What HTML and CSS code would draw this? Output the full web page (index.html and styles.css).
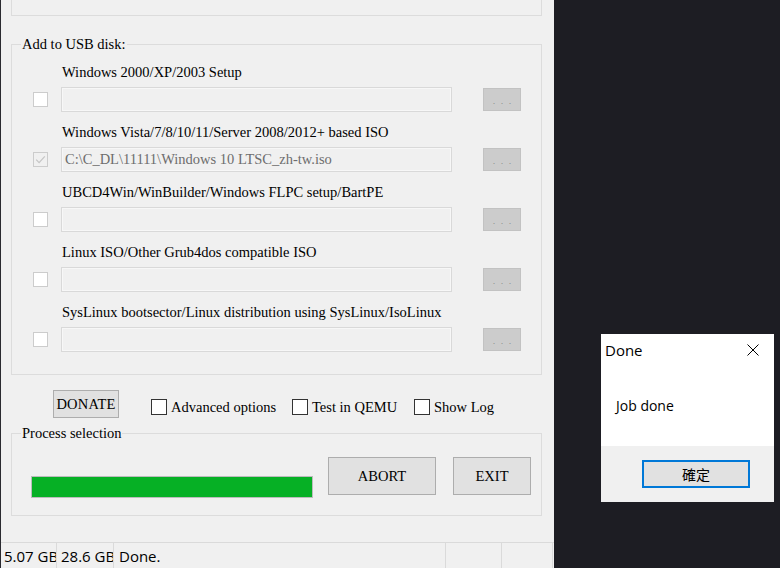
FILE: index.html
```html
<!DOCTYPE html>
<html>
<head>
<meta charset="utf-8">
<link rel="stylesheet" href="styles.css">
</head>
<body>
<div class="desk">
  <div class="win">
    <div class="grp grp-top"></div>

    <div class="grp grp-usb">
      <span class="legend">Add to USB disk:</span>
      <div class="src">
        <div class="src-label">Windows 2000/XP/2003 Setup</div>
        <span class="chk"></span>
        <div class="field"></div>
        <span class="browse">. . .</span>
      </div>
      <div class="src">
        <div class="src-label">Windows Vista/7/8/10/11/Server 2008/2012+ based ISO</div>
        <span class="chk chk-on"><svg viewBox="0 0 15 15" width="15" height="15"><path d="M3.2 7.6 L6.1 10.6 L11.8 4.4" fill="none" stroke="#c4c4c4" stroke-width="1.2"/></svg></span>
        <div class="field">C:\C_DL\11111\Windows 10 LTSC_zh-tw.iso</div>
        <span class="browse">. . .</span>
      </div>
      <div class="src">
        <div class="src-label">UBCD4Win/WinBuilder/Windows FLPC setup/BartPE</div>
        <span class="chk"></span>
        <div class="field"></div>
        <span class="browse">. . .</span>
      </div>
      <div class="src">
        <div class="src-label">Linux ISO/Other Grub4dos compatible ISO</div>
        <span class="chk"></span>
        <div class="field"></div>
        <span class="browse">. . .</span>
      </div>
      <div class="src">
        <div class="src-label">SysLinux bootsector/Linux distribution using SysLinux/IsoLinux</div>
        <span class="chk"></span>
        <div class="field"></div>
        <span class="browse">. . .</span>
      </div>
    </div>

    <div class="opts">
      <span class="btn donate">DONATE</span>
      <span class="opt opt-adv"><span class="box"></span>Advanced options</span>
      <span class="opt opt-qemu"><span class="box"></span>Test in QEMU</span>
      <span class="opt"><span class="box"></span>Show Log</span>
    </div>

    <div class="grp grp-proc">
      <span class="legend">Process selection</span>
      <div class="progress"><div class="bar" style="width:100%"></div></div>
      <span class="btn big abort">ABORT</span>
      <span class="btn big exit">EXIT</span>
    </div>

    <div class="status">
      <span class="panel p1">5.07 GB</span>
      <span class="panel p2">28.6 GB</span>
      <span class="panel p3">Done.</span>
      <span class="panel p4"></span>
      <span class="panel p5"></span>
    </div>
  </div>

  <div class="dialog">
    <div class="dlg-title">
      <span>Done</span>
      <svg class="dlg-close" viewBox="0 0 12 12" width="12" height="12"><path d="M0.5 0.5 L11.5 11.5 M11.5 0.5 L0.5 11.5" stroke="#000" stroke-width="1" fill="none"/></svg>
    </div>
    <div class="dlg-body">Job done</div>
    <div class="dlg-foot"><span class="dlg-ok">確定</span></div>
  </div>
</div>
</body>
</html>
```
FILE: styles.css
```css
* { box-sizing: border-box; }
html, body { margin: 0; padding: 0; }
body { background: #1d1d23; }

.desk {
  position: relative;
  width: 780px;
  height: 568px;
  overflow: hidden;
  background: #1d1d23;
}

.win {
  width: 554px;
  height: 568px;
  border-left: 1px solid #2a2a30;
  background: #f0f0f0;
  display: flex;
  flex-direction: column;
  font-family: "Liberation Serif", "Noto Sans CJK TC", serif;
  font-size: 14.5px;
  color: #000;
}

.grp {
  position: relative;
  margin-left: 10px;
  margin-right: 12px;
  border: 1px solid #dcdcdc;
}

.grp-top {
  height: 16px;
  border-top: none;
}

.legend {
  position: absolute;
  top: -9px;
  left: 9px;
  padding: 0 1px;
  line-height: 16px;
  background: #f0f0f0;
  white-space: nowrap;
}

.grp-usb {
  margin-top: 28px;
  padding: 19px 0 22px 21px;
  display: flex;
  flex-direction: column;
  gap: 12px;
}

.src {
  display: grid;
  grid-template-columns: 15px 391px 56px;
  grid-template-rows: 16px 25px;
  column-gap: 13px;
  row-gap: 7px;
  align-items: center;
}

.src-label {
  grid-column: 2;
  grid-row: 1;
  line-height: 16px;
  padding-left: 1px;
  white-space: nowrap;
}

.chk {
  grid-column: 1;
  grid-row: 2;
  width: 15px;
  height: 15px;
  border: 1px solid #cccccc;
  background: #ffffff;
  display: block;
  position: relative;
}
.chk-on { background: #f0f0f0; }
.chk-on svg { position: absolute; left: -1px; top: -1px; }

.field {
  grid-column: 2;
  grid-row: 2;
  height: 25px;
  border: 1px solid #d9d9d9;
  box-shadow: inset 0 0 0 1px #f7f7f7;
  background: #f0f0f0;
  color: #6d6d6d;
  padding: 0 0 0 3px;
  line-height: 23px;
  white-space: nowrap;
  overflow: hidden;
}

.browse {
  grid-column: 3;
  grid-row: 2;
  justify-self: end;
  width: 38px;
  height: 23px;
  background: #cccccc;
  border: 1px solid #c2c2c2;
  color: #8c8c8c;
  font-family: "Liberation Sans", sans-serif;
  font-size: 9px;
  line-height: 24px;
  text-align: center;
  word-spacing: 3px;
}

.opts {
  margin-top: 15px;
  height: 28px;
  display: flex;
  align-items: center;
  padding-left: 52px;
}

.btn {
  display: flex;
  align-items: center;
  justify-content: center;
  background: #e1e1e1;
  border: 1px solid #adadad;
  white-space: nowrap;
}

.donate {
  width: 66px;
  height: 28px;
  margin-right: 32px;
  letter-spacing: 0.2px;
}

.opt {
  display: flex;
  align-items: center;
  gap: 4px;
  white-space: nowrap;
  margin-top: 6px;
}
.opt-adv { width: 141px; }
.opt-qemu { width: 122px; }

.box {
  width: 16px;
  height: 16px;
  border: 1px solid #333333;
  background: #ffffff;
  flex: none;
}

.grp-proc {
  margin-top: 15px;
  height: 83px;
  padding: 23px 10px 0 19px;
  display: flex;
  align-items: center;
  align-self: flex-start;
  width: 531px;
}

.progress {
  width: 282px;
  height: 22px;
  border: 1px solid #bcbcbc;
  background: #e6e6e6;
  margin-right: 15px;
  align-self: center;
  margin-top: 2px;
}
.bar { height: 100%; background: #06b025; }

.big {
  height: 38px;
  align-self: flex-start;
  padding-top: 1px;
}
.abort { width: 108px; margin-right: 17px; }
.exit { width: 78px; }

.status {
  margin-top: auto;
  height: 26px;
  border-top: 1px solid #dadada;
  display: flex;
  font-family: "Open Sans", "Noto Sans", sans-serif;
  font-size: 15px;
  color: #000;
}
.panel {
  height: 25px;
  line-height: 26px;
  white-space: nowrap;
  overflow: hidden;
  border-right: 1px solid #dadada;
  padding-left: 3px;
}
.p1 { width: 56px; }
.p2 { width: 57px; padding-left: 4px; }
.p3 { width: 332px; padding-left: 5px; }
.p4 { width: 56px; }
.p5 { width: 51px; }

.dialog {
  position: absolute;
  left: 601px;
  top: 334px;
  width: 173px;
  height: 168px;
  background: #ffffff;
  display: flex;
  flex-direction: column;
  font-family: "Open Sans", "Noto Sans", "Noto Sans CJK TC", sans-serif;
  color: #000;
}
.dlg-title {
  height: 31px;
  display: flex;
  align-items: center;
  justify-content: space-between;
  padding: 0 15px 0 4px;
  font-size: 15px;
}
.dlg-close { display: block; }
.dlg-body {
  height: 81px;
  padding: 31px 0 0 15px;
  font-size: 14px;
  line-height: 20px;
  color: #000;
}
.dlg-foot {
  flex: 1;
  background: #f0f0f0;
  padding: 14px 0 0 41px;
}
.dlg-ok {
  display: flex;
  align-items: center;
  justify-content: center;
  width: 108px;
  height: 28px;
  border: 2px solid #0078d7;
  background: #e1e1e1;
  font-family: "Noto Sans CJK TC", sans-serif;
  font-size: 14px;
}
```
